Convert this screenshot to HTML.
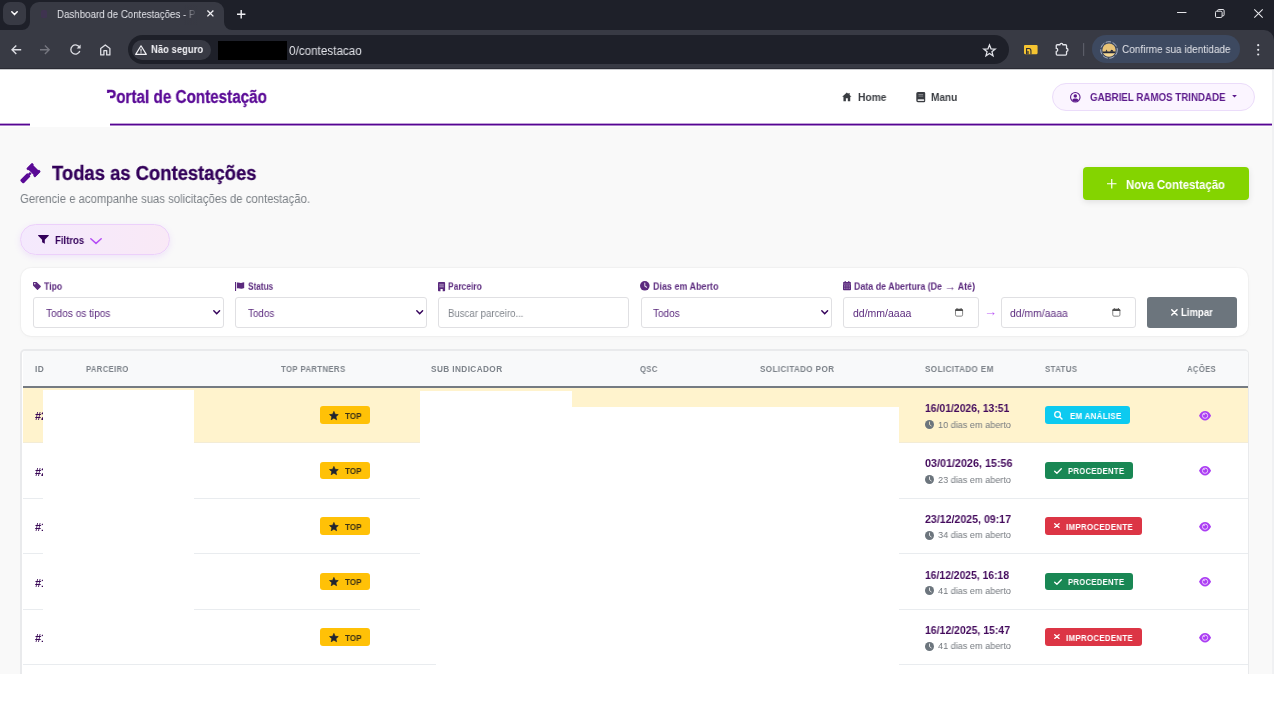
<!DOCTYPE html>
<html lang="pt-BR">
<head>
<meta charset="utf-8">
<title>Dashboard de Contestações - Portal de Contestação</title>
<style>
*{box-sizing:border-box;margin:0;padding:0}
html,body{width:1274px;height:708px;overflow:hidden;background:#fff}
body{position:relative;font-family:"Liberation Sans",sans-serif;color:#222}
.a{position:absolute;white-space:nowrap;line-height:1}
.ct,.nav,.lbl,.it,.th,.id,.topt,.dt,.ds,.bt,#brand,#uname,#title,#subtitle,#nbtxt,#ftxt,#arr,#clrt{will-change:transform}
svg{position:absolute;overflow:visible}
/* ---------- browser chrome ---------- */
#tabbar{left:0;top:0;width:1274px;height:45px;background:#1e2029}
#toolbar{left:0;top:30px;width:1274px;height:39.2px;background:#383a44;border-bottom:1.6px solid #2a2b34;border-radius:0 10px 0 0}
#tab{left:30px;top:2px;width:194px;height:28px;background:#383a44;border-radius:9px 9px 0 0}
#tabsearch{left:3px;top:2px;width:23px;height:23px;border-radius:7px;background:#383a44}
#omni{left:128px;top:35px;width:881px;height:29px;border-radius:15px;background:#1e2029}
#chip{left:132px;top:39.6px;width:79px;height:20.4px;border-radius:11px;background:#383a44}
#idpill{left:1092px;top:35px;width:148px;height:28px;border-radius:14px;background:#3d4960}
.ct{color:#e2e3e9;font-size:11px}
/* ---------- page ---------- */
#page{left:0;top:69px;width:1274px;height:605px;background:#f9f9f9}
#header{left:0;top:69px;width:1272px;height:58px;background:#fff}
#hline{left:0;top:123px;width:1272px;height:3px;background:linear-gradient(to bottom,rgba(90,10,150,.38) 0,rgba(90,10,150,.38) 1px,#560593 1px,#560593 2px,rgba(90,10,150,.5) 2px,rgba(90,10,150,.5) 3px)}
#sb{left:1272px;top:69.5px;width:2px;height:605px;background:#f0f1f3}
#bottom{left:0;top:674px;width:1274px;height:34px;background:#fff}
.w{background:#fff}
.nav{font-size:10.5px;font-weight:bold;color:#3a3d42;top:92px}
#userpill{left:1052px;top:83px;width:203px;height:28px;border-radius:14px;background:#fbf5ff;border:1px solid #ebdcfa}
#newbtn{left:1083px;top:167px;width:166px;height:33px;border-radius:4px;background:#84d400;box-shadow:0 2px 6px rgba(0,0,0,.10)}
#filtros{left:20px;top:224px;width:150px;height:31px;border-radius:16px;background:linear-gradient(90deg,#f4e9fd,#f9e9f6);border:1px solid #ecd0fb;box-shadow:0 2px 6px rgba(168,85,247,.13)}
#fcard{left:21px;top:268px;width:1227px;height:68px;border-radius:10px;background:#fff;box-shadow:0 0 0 1px rgba(0,0,0,.022),0 1px 4px rgba(0,0,0,.03)}
.lbl{font-size:10px;font-weight:bold;color:#5b2a7e;top:281.6px}
.inp{top:297px;height:31px;border:1px solid #e0e0e3;border-radius:3px;background:#fff}
.it{font-size:10.5px;color:#5b2a7e;top:308.4px}
#tcard{left:20px;top:348.6px;width:1229px;height:330px;background:#fff;border:2px solid #e9eaec;border-right-width:1px;border-radius:5px 5px 0 0}
#thead{left:23px;top:350.6px;width:1225px;height:35.4px;background:#f8f9fa;border-radius:3px 3px 0 0}
#thline{left:23px;top:385.8px;width:1225px;height:2px;background:#757b82}
.th{font-size:8.2px;font-weight:bold;color:#7d838a;letter-spacing:.4px;top:365.6px}
.sep{left:23px;width:1225px;height:1px;background:#e9ecef}
.id{left:35px;font-size:11px;font-weight:bold;color:#3b0a57}
.top{left:320.2px;width:50px;height:17.7px;border-radius:3px;background:#ffc107}
.topt{left:345px;font-size:8.5px;font-weight:bold;color:#3a3016}
.dt{left:925px;font-size:11px;font-weight:bold;color:#430a5c}
.ds{left:938px;font-size:9.4px;color:#73787e}
.bdg{left:1045.2px;height:17.7px;border-radius:3px}
.bt{font-size:8.6px;font-weight:bold;color:#fff;letter-spacing:.3px}
</style>
</head>
<body>
<div class="a" id="page"></div>
<div class="a" id="header"></div>
<div class="a" id="hline"></div>
<div class="a" id="sb"></div>

<!-- ===== site header ===== -->
<div class="a" id="brand" style="transform-origin:0 50%;transform:scale(0.8713,1.000);left:106px;top:89.3px;-webkit-text-stroke:.3px #5a0a96;font-size:17.5px;font-weight:bold;color:#5a0a96">Portal de Contestação</div>
<div class="a w" style="left:30px;top:93px;width:80px;height:34px"></div>
<svg style="left:841.7px;top:92.2px" width="9.7" height="9.7" viewBox="0 0 16 16" ><path fill="#3a3d42" d="M8 0.8 L0.3 8 H2.4 V15.2 H6.4 V10.4 H9.6 V15.2 H13.6 V8 H15.7 L12.6 5.1 V1.6 H10.6 V3.2 Z"/></svg>
<div class="a nav" id="nhome" style="transform-origin:0 50%;transform:scale(0.9764,1.000);left:858px">Home</div>
<svg style="left:916px;top:91.5px" width="9.5" height="10.2" viewBox="0 0 14 16" ><path fill="#3a3d42" d="M2.5 0 H12 A2 2 0 0 1 14 2 V14 A2 2 0 0 1 12 16 H2.5 A2.5 2.5 0 0 1 0 13.5 V2.5 A2.5 2.5 0 0 1 2.5 0 Z"/><rect x="2" y="11.4" width="10.4" height="2.6" rx="1" fill="#e8e8ea"/><rect x="3.4" y="3.2" width="7.4" height="1.2" fill="#9a9ca0"/><rect x="3.4" y="5.8" width="7.4" height="1.2" fill="#9a9ca0"/></svg>
<div class="a nav" id="nmanu" style="transform-origin:0 50%;transform:scale(0.9591,1.000);left:931px">Manu</div>
<div class="a" id="userpill"></div>
<svg style="left:1070.4px;top:92.2px" width="10.6" height="10.6" viewBox="-5.3 -5.3 10.6 10.6" ><circle r="4.75" fill="#fbf5ff" stroke="#5c1a8c" stroke-width="1.1"/><circle cy="-1.2" r="1.75" fill="#5c1a8c"/><path fill="#5c1a8c" d="M-3.2 3 C-2.6 1.6 -1.2 1.3 0 1.3 C1.2 1.3 2.6 1.6 3.2 3 A4.4 4.4 0 0 1 -3.2 3 Z"/></svg>
<div class="a" id="uname" style="transform-origin:0 50%;transform:scale(0.9266,1.000);left:1090px;top:92px;font-size:10.5px;font-weight:bold;color:#5c1a8c">GABRIEL RAMOS TRINDADE</div>
<svg style="left:1232.3px;top:95.4px" width="5" height="2.4" viewBox="0 0 10 5" ><path fill="#5c1a8c" d="M0 0 H10 L5 5 Z"/></svg>

<!-- ===== title ===== -->
<svg style="left:14px;top:158px" width="40" height="30" viewBox="14 158 40 30" ><g fill="#5a0a96" transform="translate(33.5 170.1) rotate(-45)"><rect x="-3.3" y="-6" width="6.6" height="12"/><rect x="-4.2" y="-6.1" width="8.4" height="2.6" rx=".7"/><rect x="-4.2" y="3.5" width="8.4" height="2.6" rx=".7"/><rect x="-6.8" y="-1.2" width="3" height="2.4"/><rect x="-16.9" y="-2.4" width="10.6" height="4.8" rx="1.2"/></g></svg>
<div class="a" id="title" style="transform-origin:0 50%;transform:scale(0.9451,1.000);left:52px;top:163.7px;-webkit-text-stroke:.3px #33005a;font-size:19.5px;font-weight:bold;color:#33005a">Todas as Contestações</div>
<div class="a" id="subtitle" style="transform-origin:0 50%;transform:scale(0.9073,1.000);left:20px;top:193px;font-size:12.5px;color:#7b8086">Gerencie e acompanhe suas solicitações de contestação.</div>
<div class="a" id="newbtn"></div>
<svg style="left:1106.8px;top:178.9px" width="9.5" height="9.5" viewBox="0 0 10 10" ><path stroke="#fff" stroke-width="1.25" d="M5 0 V10 M0 5 H10"/></svg>
<div class="a" id="nbtxt" style="transform-origin:0 50%;transform:scale(0.9455,1.000);left:1126px;top:179px;font-size:12px;font-weight:bold;color:#fff">Nova Contestação</div>
<div class="a" id="filtros"></div>
<svg style="left:38px;top:235.2px" width="10.9" height="8.8" viewBox="0 0 11 9" ><path fill="#33005a" d="M0.4 0 H10.6 A.4 .4 0 0 1 10.9 .7 L6.9 4.8 V9 L4.1 7.3 V4.8 L0.1 .7 A.4 .4 0 0 1 .4 0 Z"/></svg>
<div class="a" id="ftxt" style="transform-origin:0 50%;transform:scale(0.9098,1.000);left:55px;top:235px;font-size:10.5px;font-weight:bold;color:#33005a">Filtros</div>
<svg style="left:90px;top:237.5px" width="12" height="6.2" viewBox="0 0 12 6.2" ><path fill="none" stroke="#b44cf5" stroke-width="1.5" stroke-linecap="round" stroke-linejoin="round" d="M0.8 0.8 L6 5.4 L11.2 0.8"/></svg>

<!-- ===== filter card ===== -->
<div class="a" id="fcard"></div>
<svg style="left:33.2px;top:282.4px" width="8" height="8" viewBox="0 0 8 8" ><path fill="#5b2a7e" d="M0 .7 A.7 .7 0 0 1 .7 0 H3.6 L7.7 4.1 A.6 .6 0 0 1 7.7 4.9 L4.9 7.7 A.6 .6 0 0 1 4.1 7.7 L0 3.6 Z"/><circle cx="1.8" cy="1.8" r=".75" fill="#fff"/></svg>
<div class="a lbl" id="l1" style="transform-origin:0 50%;transform:scale(0.8693,0.920);left:44.4px">Tipo</div>
<svg style="left:235.1px;top:281.7px" width="9.2" height="9" viewBox="0 0 9.2 9" ><rect x="0" y="0" width="1.1" height="9" fill="#5b2a7e"/><path fill="#5b2a7e" d="M1.9 .6 C3.5 0 4.8 1 6.2 .9 C7.4 .9 8.2 .5 9.2 .3 V6 C8.2 6.4 7.4 6.8 6.2 6.7 C4.8 6.7 3.5 5.8 1.9 6.4 Z"/></svg>
<div class="a lbl" id="l2" style="transform-origin:0 50%;transform:scale(0.8213,0.920);left:247.8px">Status</div>
<svg style="left:437.7px;top:281.6px" width="7.1" height="9.3" viewBox="0 0 7.1 9.3" ><path fill="#5b2a7e" d="M.9 0 H6.2 A.9 .9 0 0 1 7.1 .9 V8.6 A.7 .7 0 0 1 6.4 9.3 H4.7 V7.1 H2.5 V9.3 H.7 A.7 .7 0 0 1 0 8.6 V.9 A.9 .9 0 0 1 .9 0 Z"/><rect x="1.3" y="1.8" width="4.5" height="2" fill="#fff" opacity=".35"/><rect x="1.3" y="4.5" width="4.5" height=".7" fill="#fff" opacity=".75"/></svg>
<div class="a lbl" id="l3" style="transform-origin:0 50%;transform:scale(0.8418,0.920);left:448px">Parceiro</div>
<svg style="left:640.1px;top:281.3px" width="9.6" height="9.6" viewBox="-5 -5 10 10" ><circle r="5" fill="#5b2a7e"/><path fill="none" stroke="#fff" stroke-width="1.05" stroke-opacity=".85" stroke-linecap="round" d="M0 -2.8 V0.1 L1.9 1.5"/></svg>
<div class="a lbl" id="l4" style="transform-origin:0 50%;transform:scale(0.8961,0.920);left:652.9px">Dias em Aberto</div>
<svg style="left:843.1px;top:281.4px" width="8" height="9.4" viewBox="0 0 7.8 9" ><path fill="#5b2a7e" d="M1.6 0 H2.7 V1 H5.1 V0 H6.2 V1 H7 A.8 .8 0 0 1 7.8 1.8 V8.2 A.8 .8 0 0 1 7 9 H.8 A.8 .8 0 0 1 0 8.2 V1.8 A.8 .8 0 0 1 .8 1 H1.6 Z"/><rect x="0" y="2.55" width="7.8" height=".55" fill="#fff" opacity=".55"/><g fill="#fff" opacity=".5"><rect x="1.1" y="4.2" width="1.2" height="1.1"/><rect x="3.3" y="4.2" width="1.2" height="1.1"/><rect x="5.5" y="4.2" width="1.2" height="1.1"/><rect x="1.1" y="6.4" width="1.2" height="1.1"/><rect x="3.3" y="6.4" width="1.2" height="1.1"/><rect x="5.5" y="6.4" width="1.2" height="1.1"/></g></svg>
<div class="a lbl" id="l5" style="transform-origin:0 50%;transform:scale(0.8882,0.920);left:854.3px">Data de Abertura (De <span style="font-size:12.5px;line-height:0;position:relative;top:.5px">→</span> Até)</div>
<div class="a inp" style="left:33px;width:191px"></div>
<div class="a inp" style="left:235px;width:191.5px"></div>
<div class="a inp" style="left:437.5px;width:191.5px"></div>
<div class="a inp" style="left:640.5px;width:191.5px"></div>
<div class="a inp" style="left:843px;width:135.5px"></div>
<div class="a inp" style="left:1000.5px;width:135.5px"></div>
<div class="a it" id="i1" style="transform-origin:0 50%;transform:scale(0.9594,1.000);left:45.6px">Todos os tipos</div>
<div class="a it" id="i2" style="transform-origin:0 50%;transform:scale(0.9382,1.000);left:248px">Todos</div>
<div class="a it" id="i3" style="transform-origin:0 50%;transform:scale(0.9174,1.000);left:447.5px;color:#80858c">Buscar parceiro...</div>
<div class="a it" id="i4" style="transform-origin:0 50%;transform:scale(0.9525,1.000);left:653px">Todos</div>
<div class="a it" id="i5" style="transform-origin:0 50%;transform:scale(0.9936,1.000);left:852.5px">dd/mm/aaaa</div>
<div class="a it" id="i6" style="transform-origin:0 50%;transform:scale(0.9901,1.000);left:1009.6px">dd/mm/aaaa</div>
<svg style="left:212.9px;top:310.4px" width="7.4" height="4.8" viewBox="0 0 7.4 4.8" ><path fill="none" stroke="#33005a" stroke-width="1.45" stroke-linecap="round" stroke-linejoin="miter" d="M0.8 0.8 L3.7 3.8 L6.6 0.8"/></svg><svg style="left:415.8px;top:310.4px" width="7.4" height="4.8" viewBox="0 0 7.4 4.8" ><path fill="none" stroke="#33005a" stroke-width="1.45" stroke-linecap="round" stroke-linejoin="miter" d="M0.8 0.8 L3.7 3.8 L6.6 0.8"/></svg><svg style="left:820.8px;top:310.4px" width="7.4" height="4.8" viewBox="0 0 7.4 4.8" ><path fill="none" stroke="#33005a" stroke-width="1.45" stroke-linecap="round" stroke-linejoin="miter" d="M0.8 0.8 L3.7 3.8 L6.6 0.8"/></svg>
<svg style="left:955.2px;top:308.1px" width="8.1" height="8.7" viewBox="0 0 8.1 8.6" ><rect x=".5" y="1.1" width="7.1" height="7" rx="1.3" fill="none" stroke="#808080" stroke-width=".95"/><path fill="#505050" d="M.1 3 V2.3 A1.4 1.4 0 0 1 1.5 .9 H6.6 A1.4 1.4 0 0 1 8 2.3 V3 Z"/><rect x="1.5" y="0" width="1" height="1.6" rx=".4" fill="#505050"/><rect x="5.6" y="0" width="1" height="1.6" rx=".4" fill="#505050"/></svg><svg style="left:1112px;top:308.1px" width="8.7" height="8.7" viewBox="0 0 8.1 8.6" ><rect x=".5" y="1.1" width="7.1" height="7" rx="1.3" fill="none" stroke="#808080" stroke-width=".95"/><path fill="#505050" d="M.1 3 V2.3 A1.4 1.4 0 0 1 1.5 .9 H6.6 A1.4 1.4 0 0 1 8 2.3 V3 Z"/><rect x="1.5" y="0" width="1" height="1.6" rx=".4" fill="#505050"/><rect x="5.6" y="0" width="1" height="1.6" rx=".4" fill="#505050"/></svg>
<div class="a" id="arr" style="left:983.8px;top:305.2px;font-size:13px;font-weight:bold;color:#bb5af5">→</div>
<div class="a" id="clr" style="left:1147px;top:297px;width:89.5px;height:31px;border-radius:3px;background:#6c757d"></div>
<svg style="left:1170.8px;top:309.2px" width="6.8" height="6.8" viewBox="0 0 6.4 6.4" ><path stroke="#fff" stroke-width="1.4" stroke-linecap="round" d="M.7 .7 L5.7 5.7 M5.7 .7 L.7 5.7"/></svg>
<div class="a" id="clrt" style="transform-origin:0 50%;transform:scale(0.9507,1.000);left:1181px;top:308px;font-size:10px;font-weight:bold;color:#fff">Limpar</div>

<!-- ===== table ===== -->
<div class="a" id="tcard"></div>
<div class="a" id="thead"></div>
<div class="a" id="row1" style="left:23px;top:387px;width:1225px;height:55.5px;background:#fff3cd"></div>
<div class="a" id="thline"></div>
<div class="a sep" style="top:442.3px;background:#f3ecd6"></div>
<div class="a sep" style="top:498px"></div>
<div class="a sep" style="top:553.3px"></div>
<div class="a sep" style="top:608.7px"></div>
<div class="a sep" style="top:664px"></div>
<div class="a th" id="h1" style="transform-origin:0 50%;transform:scale(1.0222,1.000);left:35.3px">ID</div>
<div class="a th" id="h2" style="transform-origin:0 50%;transform:scale(0.9321,1.000);left:85.9px">PARCEIRO</div>
<div class="a th" id="h3" style="transform-origin:0 50%;transform:scale(0.9479,1.000);left:281px">TOP PARTNERS</div>
<div class="a th" id="h4" style="transform-origin:0 50%;transform:scale(1.0048,1.000);left:430.5px">SUB INDICADOR</div>
<div class="a th" id="h5" style="transform-origin:0 50%;transform:scale(0.9286,1.000);left:640.4px">QSC</div>
<div class="a th" id="h6" style="transform-origin:0 50%;transform:scale(0.9841,1.000);left:760.2px">SOLICITADO POR</div>
<div class="a th" id="h7" style="transform-origin:0 50%;transform:scale(0.9879,1.000);left:925.4px">SOLICITADO EM</div>
<div class="a th" id="h8" style="transform-origin:0 50%;transform:scale(0.9547,1.000);left:1044.9px">STATUS</div>
<div class="a th" id="h9" style="transform-origin:0 50%;transform:scale(0.9317,1.000);left:1187px">AÇÕES</div>

<!-- rows -->
<div class="a id" style="top:411px">#2</div>
<div class="a id" style="top:466.5px">#2</div>
<div class="a id" style="top:522px">#1</div>
<div class="a id" style="top:577.5px">#1</div>
<div class="a id" style="top:633px">#1</div>

<div class="a top" style="top:406.1px"></div><div class="a topt" id="t1" style="transform-origin:0 50%;transform:scale(0.9522,1.000);top:411.6px">TOP</div>
<div class="a top" style="top:461.5px"></div><div class="a topt" id="t2" style="transform-origin:0 50%;transform:scale(0.9522,1.000);top:467.1px">TOP</div>
<div class="a top" style="top:517.2px"></div><div class="a topt" id="t3" style="transform-origin:0 50%;transform:scale(0.9522,1.000);top:522.6px">TOP</div>
<div class="a top" style="top:572.6px"></div><div class="a topt" id="t4" style="transform-origin:0 50%;transform:scale(0.9522,1.000);top:578.1px">TOP</div>
<div class="a top" style="top:628px"></div><div class="a topt" id="t5" style="transform-origin:0 50%;transform:scale(0.9522,1.000);top:633.6px">TOP</div>
<svg style="left:329px;top:410.6px" width="9.8" height="9.4" viewBox="0 0 9.8 9.4" ><polygon fill="#1f2430" stroke="#1f2430" stroke-width=".7" stroke-linejoin="round" points="4.90,0.40 6.13,3.30 9.27,3.58 6.90,5.65 7.60,8.72 4.90,7.10 2.20,8.72 2.90,5.65 0.53,3.58 3.67,3.30"/></svg><svg style="left:329px;top:466.1px" width="9.8" height="9.4" viewBox="0 0 9.8 9.4" ><polygon fill="#1f2430" stroke="#1f2430" stroke-width=".7" stroke-linejoin="round" points="4.90,0.40 6.13,3.30 9.27,3.58 6.90,5.65 7.60,8.72 4.90,7.10 2.20,8.72 2.90,5.65 0.53,3.58 3.67,3.30"/></svg><svg style="left:329px;top:521.6px" width="9.8" height="9.4" viewBox="0 0 9.8 9.4" ><polygon fill="#1f2430" stroke="#1f2430" stroke-width=".7" stroke-linejoin="round" points="4.90,0.40 6.13,3.30 9.27,3.58 6.90,5.65 7.60,8.72 4.90,7.10 2.20,8.72 2.90,5.65 0.53,3.58 3.67,3.30"/></svg><svg style="left:329px;top:577.1px" width="9.8" height="9.4" viewBox="0 0 9.8 9.4" ><polygon fill="#1f2430" stroke="#1f2430" stroke-width=".7" stroke-linejoin="round" points="4.90,0.40 6.13,3.30 9.27,3.58 6.90,5.65 7.60,8.72 4.90,7.10 2.20,8.72 2.90,5.65 0.53,3.58 3.67,3.30"/></svg><svg style="left:329px;top:632.6px" width="9.8" height="9.4" viewBox="0 0 9.8 9.4" ><polygon fill="#1f2430" stroke="#1f2430" stroke-width=".7" stroke-linejoin="round" points="4.90,0.40 6.13,3.30 9.27,3.58 6.90,5.65 7.60,8.72 4.90,7.10 2.20,8.72 2.90,5.65 0.53,3.58 3.67,3.30"/></svg>

<div class="a dt" id="d1" style="transform-origin:0 50%;transform:scale(0.9439,1.000);top:403px">16/01/2026, 13:51</div><div class="a ds" id="s1" style="transform-origin:0 50%;transform:scale(0.9727,1.000);top:419.5px">10 dias em aberto</div>
<div class="a dt" id="d2" style="transform-origin:0 50%;transform:scale(0.9797,1.000);top:458.1px">03/01/2026, 15:56</div><div class="a ds" id="s2" style="transform-origin:0 50%;transform:scale(0.9727,1.000);top:474.8px">23 dias em aberto</div>
<div class="a dt" id="d3" style="transform-origin:0 50%;transform:scale(0.9629,1.000);top:514px">23/12/2025, 09:17</div><div class="a ds" id="s3" style="transform-origin:0 50%;transform:scale(0.9727,1.000);top:530.3px">34 dias em aberto</div>
<div class="a dt" id="d4" style="transform-origin:0 50%;transform:scale(0.9405,1.000);top:569.5px">16/12/2025, 16:18</div><div class="a ds" id="s4" style="transform-origin:0 50%;transform:scale(0.9727,1.000);top:585.8px">41 dias em aberto</div>
<div class="a dt" id="d5" style="transform-origin:0 50%;transform:scale(0.9517,1.000);top:625px">16/12/2025, 15:47</div><div class="a ds" id="s5" style="transform-origin:0 50%;transform:scale(0.9727,1.000);top:641.4px">41 dias em aberto</div>
<svg style="left:925.1px;top:419.5px" width="9" height="9" viewBox="-5 -5 10 10" ><circle r="5" fill="#6c757d"/><path fill="none" stroke="#fff3cd" stroke-width="1.05" stroke-opacity=".85" stroke-linecap="round" d="M0 -2.8 V0.1 L1.9 1.5"/></svg><svg style="left:925.1px;top:475px" width="9" height="9" viewBox="-5 -5 10 10" ><circle r="5" fill="#6c757d"/><path fill="none" stroke="#fff" stroke-width="1.05" stroke-opacity=".85" stroke-linecap="round" d="M0 -2.8 V0.1 L1.9 1.5"/></svg><svg style="left:925.1px;top:530.5px" width="9" height="9" viewBox="-5 -5 10 10" ><circle r="5" fill="#6c757d"/><path fill="none" stroke="#fff" stroke-width="1.05" stroke-opacity=".85" stroke-linecap="round" d="M0 -2.8 V0.1 L1.9 1.5"/></svg><svg style="left:925.1px;top:586px" width="9" height="9" viewBox="-5 -5 10 10" ><circle r="5" fill="#6c757d"/><path fill="none" stroke="#fff" stroke-width="1.05" stroke-opacity=".85" stroke-linecap="round" d="M0 -2.8 V0.1 L1.9 1.5"/></svg><svg style="left:925.1px;top:641.5px" width="9" height="9" viewBox="-5 -5 10 10" ><circle r="5" fill="#6c757d"/><path fill="none" stroke="#fff" stroke-width="1.05" stroke-opacity=".85" stroke-linecap="round" d="M0 -2.8 V0.1 L1.9 1.5"/></svg>

<div class="a bdg" style="top:406.1px;width:84.7px;background:#0dcaf0"></div><div class="a bt" id="b1" style="transform-origin:0 50%;transform:scale(0.9248,1.000);left:1069.5px;top:411.6px">EM ANÁLISE</div>
<div class="a bdg" style="top:461.5px;width:88px;background:#198754"></div><div class="a bt" id="b2" style="transform-origin:0 50%;transform:scale(0.8981,1.000);left:1067.7px;top:467.1px">PROCEDENTE</div>
<div class="a bdg" style="top:517.2px;width:96.7px;background:#dc3545"></div><div class="a bt" id="b3" style="transform-origin:0 50%;transform:scale(0.9198,1.000);left:1065.6px;top:522.6px">IMPROCEDENTE</div>
<div class="a bdg" style="top:572.6px;width:88px;background:#198754"></div><div class="a bt" id="b4" style="transform-origin:0 50%;transform:scale(0.8981,1.000);left:1067.7px;top:578.1px">PROCEDENTE</div>
<div class="a bdg" style="top:628px;width:96.7px;background:#dc3545"></div><div class="a bt" id="b5" style="transform-origin:0 50%;transform:scale(0.9198,1.000);left:1065.6px;top:633.6px">IMPROCEDENTE</div>
<svg style="left:1053.5px;top:411.2px" width="9" height="9" viewBox="0 0 9 9" ><circle cx="3.55" cy="3.55" r="2.85" fill="none" stroke="#fff" stroke-width="1.25"/><path stroke="#fff" stroke-width="1.45" stroke-linecap="round" d="M5.7 5.7 L8 8"/></svg><svg style="left:1053.5px;top:467.6px" width="8" height="6" viewBox="0 0 8 6" ><path fill="none" stroke="#fff" stroke-width="1.35" stroke-linecap="round" stroke-linejoin="round" d="M.7 3.3 L2.9 5.3 L7.3 .7"/></svg><svg style="left:1053.5px;top:523.4px" width="5.8" height="5.1" viewBox="0 0 5.8 5.1" ><path stroke="#fff" stroke-width="1.35" stroke-linecap="round" d="M.7 .7 L5.1 4.4 M5.1 .7 L.7 4.4" /></svg><svg style="left:1053.5px;top:578.6px" width="8" height="6" viewBox="0 0 8 6" ><path fill="none" stroke="#fff" stroke-width="1.35" stroke-linecap="round" stroke-linejoin="round" d="M.7 3.3 L2.9 5.3 L7.3 .7"/></svg><svg style="left:1053.5px;top:634.4px" width="5.8" height="5.1" viewBox="0 0 5.8 5.1" ><path stroke="#fff" stroke-width="1.35" stroke-linecap="round" d="M.7 .7 L5.1 4.4 M5.1 .7 L.7 4.4" /></svg>
<svg style="left:1198.8px;top:410.6px" width="12.1" height="9.4" viewBox="-6.05 -4.7 12.1 9.4" ><path fill="#ab3ef3" d="M-6.05 0 C-4.4 -3.3 -2.3 -4.7 0 -4.7 C2.3 -4.7 4.4 -3.3 6.05 0 C4.4 3.3 2.3 4.7 0 4.7 C-2.3 4.7 -4.4 3.3 -6.05 0 Z"/><circle r="2.65" fill="none" stroke="#f3ddfd" stroke-width=".85"/><circle cx="-1" cy="-1.2" r=".65" fill="#f6e6fe"/></svg><svg style="left:1198.8px;top:466.1px" width="12.1" height="9.4" viewBox="-6.05 -4.7 12.1 9.4" ><path fill="#ab3ef3" d="M-6.05 0 C-4.4 -3.3 -2.3 -4.7 0 -4.7 C2.3 -4.7 4.4 -3.3 6.05 0 C4.4 3.3 2.3 4.7 0 4.7 C-2.3 4.7 -4.4 3.3 -6.05 0 Z"/><circle r="2.65" fill="none" stroke="#f3ddfd" stroke-width=".85"/><circle cx="-1" cy="-1.2" r=".65" fill="#f6e6fe"/></svg><svg style="left:1198.8px;top:521.6px" width="12.1" height="9.4" viewBox="-6.05 -4.7 12.1 9.4" ><path fill="#ab3ef3" d="M-6.05 0 C-4.4 -3.3 -2.3 -4.7 0 -4.7 C2.3 -4.7 4.4 -3.3 6.05 0 C4.4 3.3 2.3 4.7 0 4.7 C-2.3 4.7 -4.4 3.3 -6.05 0 Z"/><circle r="2.65" fill="none" stroke="#f3ddfd" stroke-width=".85"/><circle cx="-1" cy="-1.2" r=".65" fill="#f6e6fe"/></svg><svg style="left:1198.8px;top:577.1px" width="12.1" height="9.4" viewBox="-6.05 -4.7 12.1 9.4" ><path fill="#ab3ef3" d="M-6.05 0 C-4.4 -3.3 -2.3 -4.7 0 -4.7 C2.3 -4.7 4.4 -3.3 6.05 0 C4.4 3.3 2.3 4.7 0 4.7 C-2.3 4.7 -4.4 3.3 -6.05 0 Z"/><circle r="2.65" fill="none" stroke="#f3ddfd" stroke-width=".85"/><circle cx="-1" cy="-1.2" r=".65" fill="#f6e6fe"/></svg><svg style="left:1198.8px;top:632.6px" width="12.1" height="9.4" viewBox="-6.05 -4.7 12.1 9.4" ><path fill="#ab3ef3" d="M-6.05 0 C-4.4 -3.3 -2.3 -4.7 0 -4.7 C2.3 -4.7 4.4 -3.3 6.05 0 C4.4 3.3 2.3 4.7 0 4.7 C-2.3 4.7 -4.4 3.3 -6.05 0 Z"/><circle r="2.65" fill="none" stroke="#f3ddfd" stroke-width=".85"/><circle cx="-1" cy="-1.2" r=".65" fill="#f6e6fe"/></svg>

<!-- redaction boxes -->
<div class="a w" style="left:43px;top:390.2px;width:151px;height:262px"></div>
<div class="a w" style="left:420px;top:390.5px;width:152px;height:270px"></div>
<div class="a w" style="left:572px;top:406.8px;width:327px;height:270px"></div>
<div class="a w" style="left:435.5px;top:650px;width:463.5px;height:30px"></div>

<!-- ===== browser chrome ===== -->
<div class="a" id="tabbar"></div>
<div class="a" id="toolbar"></div>
<div class="a" style="left:0;top:69px;width:1274px;height:1px;background:#c9cacd"></div>
<div class="a" id="tabsearch"></div>
<div class="a" id="tab"></div>
<svg style="left:11px;top:11.3px" width="7" height="4.6" viewBox="0 0 7 4.6" ><path fill="none" stroke="#fff" stroke-width="1.5" stroke-linecap="round" stroke-linejoin="round" d="M.8 .8 L3.5 3.6 L6.2 .8"/></svg><svg style="left:22px;top:22px" width="8" height="8" viewBox="0 0 8 8" ><path fill="#383a44" d="M8 0 V8 H0 A8 8 0 0 0 8 0 Z"/></svg><svg style="left:224px;top:22px" width="8" height="8" viewBox="0 0 8 8" ><path fill="#383a44" d="M0 0 V8 H8 A8 8 0 0 1 0 0 Z"/></svg><svg style="left:41px;top:9.5px" width="6" height="8" viewBox="0 0 6 8" ><rect width="6" height="8" rx="1.5" fill="#3f3350"/></svg><svg style="left:207.2px;top:10.3px" width="6.8" height="6.8" viewBox="0 0 6.8 6.8" ><path stroke="#f0f0f4" stroke-width="1.35" d="M.4 .4 L6.4 6.4 M6.4 .4 L.4 6.4"/></svg><svg style="left:237px;top:9.5px" width="8.4" height="8.4" viewBox="0 0 8.4 8.4" ><path stroke="#f0f0f4" stroke-width="1.4" d="M4.2 0 V8.4 M0 4.2 H8.4"/></svg><svg style="left:1177.4px;top:12px" width="9.5" height="1.2" viewBox="0 0 9.5 1.2" ><rect width="9.5" height="1" fill="#e8e8ec"/></svg><svg style="left:1215px;top:8.8px" width="9.6" height="9" viewBox="0 0 9.6 9" ><rect x=".5" y="2.2" width="6.6" height="6.3" rx="1.2" fill="none" stroke="#e8e8ec" stroke-width="1"/><path fill="none" stroke="#e8e8ec" stroke-width="1" d="M2.6 2.2 V1.6 A1.1 1.1 0 0 1 3.7 .5 H8 A1.1 1.1 0 0 1 9.1 1.6 V5.8 A1.1 1.1 0 0 1 8 6.9 H7.2"/></svg><svg style="left:1253.6px;top:8.6px" width="9" height="9" viewBox="0 0 9 9" ><path stroke="#e8e8ec" stroke-width="1.05" d="M.3 .3 L8.7 8.7 M8.7 .3 L.3 8.7"/></svg>
<div class="a ct" id="tabt" style="transform-origin:0 50%;transform:scale(0.8841,1.000);left:57.3px;top:8.5px">Dashboard de Contestações - P</div>
<div class="a" style="left:184px;top:5px;width:15px;height:20px;background:linear-gradient(90deg,rgba(56,58,68,0),rgba(56,58,68,.85) 70%,#383a44)"></div>
<div class="a" id="omni"></div>
<div class="a" id="chip"></div>
<div class="a ct" id="nseg" style="transform-origin:0 50%;transform:scale(0.8626,1.000);left:151.3px;top:44px;font-weight:bold;color:#f0f0f4">Não seguro</div>
<div class="a ct" id="url" style="transform-origin:0 50%;transform:scale(0.9743,1.000);left:288.6px;top:44.6px;font-size:12px">0/contestacao</div>
<div class="a" style="left:218px;top:41px;width:69px;height:19px;background:#000"></div>
<div class="a" id="idpill"></div>
<div class="a ct" id="conf" style="transform-origin:0 50%;transform:scale(0.9107,1.000);left:1122.2px;top:43.5px">Confirme sua identidade</div>
<svg style="left:10.5px;top:44.5px" width="10.2" height="9.6" viewBox="0 0 10.2 9.6" ><path fill="none" stroke="#dcdde3" stroke-width="1.35" d="M10.2 4.8 H1.2 M5.3 .5 L1 4.8 L5.3 9.1"/></svg><svg style="left:40px;top:44.5px" width="10.2" height="9.6" viewBox="0 0 10.2 9.6" ><path fill="none" stroke="#75767f" stroke-width="1.35" d="M0 4.8 H9 M4.9 .5 L9.2 4.8 L4.9 9.1"/></svg><svg style="left:70px;top:44px" width="10.8" height="10.8" viewBox="-5.4 -5.4 10.8 10.8" ><path fill="none" stroke="#dcdde3" stroke-width="1.35" d="M4.3 -1.6 A4.6 4.6 0 1 0 4.4 1.6"/><path fill="#dcdde3" d="M5.2 -4.9 V-0.9 H1.2 Z"/></svg><svg style="left:100px;top:43.5px" width="10.6" height="11.6" viewBox="0 0 10.6 11.6" ><path fill="none" stroke="#dcdde3" stroke-width="1.3" stroke-linejoin="round" d="M.7 4.6 L5.3 .9 L9.9 4.6 V10.9 H6.7 V6.6 H3.9 V10.9 H.7 Z"/></svg><svg style="left:135px;top:44.5px" width="12" height="10" viewBox="0 0 12 10" ><path fill="none" stroke="#f0f0f4" stroke-width="1.2" stroke-linejoin="round" d="M6 .8 L11.3 9.4 H.7 Z"/><rect x="5.45" y="3.7" width="1.1" height="3" fill="#f0f0f4"/><rect x="5.45" y="7.3" width="1.1" height="1.1" fill="#f0f0f4"/></svg><svg style="left:983px;top:43.5px" width="13" height="12.5" viewBox="0 0 13 12.5" ><polygon fill="none" stroke="#e2e3e9" stroke-width="1.25" stroke-linejoin="miter" points="6.50,0.90 8.00,4.84 12.21,5.05 8.93,7.69 10.03,11.75 6.50,9.45 2.97,11.75 4.07,7.69 0.79,5.05 5.00,4.84"/></svg><svg style="left:1024.2px;top:45.1px" width="13.6" height="9.2" viewBox="0 0 13.5 9" ><rect width="13.5" height="9" rx="1" fill="#f5c431"/><path fill="none" stroke="#2b2b33" stroke-width="1.1" d="M2.6 9 V3.4 H5 C6.6 3.4 6.9 4.6 6.9 6 V9 M4 9 V6"/></svg><svg style="left:1055px;top:42px" width="14" height="14.3" viewBox="0 0 14 14.3" ><path fill="none" stroke="#e2e3e9" stroke-width="1.3" stroke-linejoin="round" d="M1.25 3.75 A1 1 0 0 1 2.25 2.75 H5 A1.4 1.4 0 0 1 7.8 2.75 H10.55 A1 1 0 0 1 11.55 3.75 V6.5 A1.4 1.4 0 0 1 11.55 9.3 V12.05 A1 1 0 0 1 10.55 13.05 H2.25 A1 1 0 0 1 1.25 12.05 V9.4 A1.5 1.5 0 0 0 1.25 6.4 Z"/></svg><svg style="left:1083px;top:43px" width="1.2" height="13" viewBox="0 0 1.2 13" ><rect width="1.2" height="13" fill="#5b5d68"/></svg><svg style="left:1099.5px;top:40.5px" width="18" height="18" viewBox="-9 -9 18 18" ><circle r="8.3" fill="none" stroke="#aeb6c8" stroke-width=".9" stroke-dasharray="5.5 1.6"/><circle r="6.6" fill="#e8c377"/><path fill="#f3d795" d="M-6.07 2.6 H6.07 A6.6 6.6 0 0 1 -6.07 2.6 Z"/><path fill="#232838" d="M-6.4 1.6 H6.4 L5.77 3.2 H-5.77 Z"/><path fill="#232838" d="M-3.5 1.8 L-2.6 -.6 L-1.4 1.8 Z M1 1.8 L2.2 -.2 L3.8 .3 L4.6 1.8 Z"/></svg><svg style="left:1257.3px;top:43.5px" width="2.4" height="12" viewBox="0 0 2.4 12" ><circle cx="1.2" cy="1.2" r="1.1" fill="#e2e3e9"/><circle cx="1.2" cy="5.85" r="1.1" fill="#e2e3e9"/><circle cx="1.2" cy="10.5" r="1.1" fill="#e2e3e9"/></svg>

<div class="a" id="bottom"></div>
</body>
</html>
